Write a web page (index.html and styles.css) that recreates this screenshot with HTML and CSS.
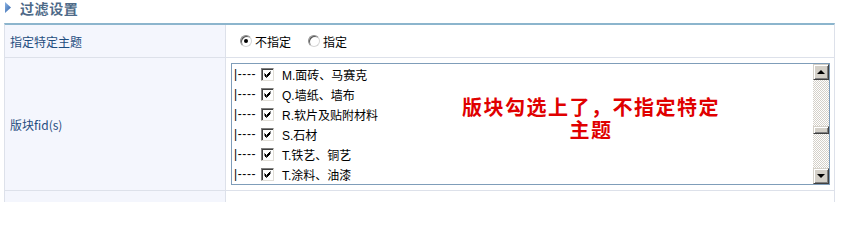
FILE: index.html
```html
<!DOCTYPE html>
<html lang="zh-CN">
<head>
<meta charset="utf-8">
<title>过滤设置</title>
<link rel="stylesheet" href="styles.css">
</head>
<body>
<div class="title">
  <svg class="tri" width="6" height="11" viewBox="0 0 6 11"><defs><linearGradient id="tg" x1="0" y1="0" x2="1" y2="1"><stop offset="0" stop-color="#8fb6e4"/><stop offset="1" stop-color="#2a5ea8"/></linearGradient></defs><polygon points="0,0 6,5.5 0,11" fill="url(#tg)"/></svg>
  <span class="title-text">过滤设置</span>
</div>
<div class="form">
  <div class="row r1">
    <div class="lbl">指定特定主题</div>
    <div class="val radios">
      <label class="radio"><span class="rb on"></span>不指定</label>
      <label class="radio"><span class="rb"></span>指定</label>
    </div>
  </div>
  <div class="row r2">
    <div class="lbl">版块fid(s)</div>
    <div class="val">
      <div class="listbox">
        <div class="items">
          <div class="item"><span class="dash">|----</span><span class="cb"></span><span class="txt">M.面砖、马赛克</span></div>
          <div class="item"><span class="dash">|----</span><span class="cb"></span><span class="txt">Q.墙纸、墙布</span></div>
          <div class="item"><span class="dash">|----</span><span class="cb"></span><span class="txt">R.软片及贴附材料</span></div>
          <div class="item"><span class="dash">|----</span><span class="cb"></span><span class="txt">S.石材</span></div>
          <div class="item"><span class="dash">|----</span><span class="cb"></span><span class="txt">T.铁艺、铜艺</span></div>
          <div class="item"><span class="dash">|----</span><span class="cb"></span><span class="txt">T.涂料、油漆</span></div>
        </div>
        <div class="sbar">
          <div class="sbtn up"><i></i></div>
          <div class="track t1"></div>
          <div class="thumb"></div>
          <div class="track t2"></div>
          <div class="sbtn down"><i></i></div>
        </div>
      </div>
    </div>
  </div>
  <div class="row r3">
    <div class="lbl"></div>
    <div class="val"></div>
  </div>
  <div class="note">版块勾选上了，不指定特定主题</div>
</div>
</body>
</html>
```
FILE: styles.css
```css
* { box-sizing: border-box; }
html, body { margin: 0; padding: 0; background: #fff; }
html, body { height: 202px; overflow: hidden; }
body {
  font-family: "Liberation Sans", "Noto Sans CJK SC", sans-serif;
  font-size: 12px;
  color: #000;
}
.title {
  height: 23px;
  display: flex;
  align-items: flex-start;
  padding-left: 5px;
  gap: 9px;
}
.tri { margin-top: 2px; flex: none; }
.title-text {
  font-size: 14px;
  line-height: 16px;
  font-weight: bold;
  color: #4e6a88;
  letter-spacing: 0.6px;
  font-family: "Noto Sans CJK SC", sans-serif;
}
.form {
  position: relative;
  margin-left: 4px;
  width: 831px;
  border-top: 2px solid #8cb5cd;
  border-left: 1px solid #dde1ea;
  border-right: 1px solid #dde1ea;
}
.row {
  display: grid;
  grid-template-columns: 221px 1fr;
  border-bottom: 1px solid #dde1ea;
}
.lbl {
  background: #f4f6fd;
  border-right: 1px solid #dde1ea;
  color: #1f4d80;
  padding-left: 5px;
  display: flex;
  align-items: center;
  font-family: "Noto Sans CJK SC", sans-serif;
}
.r1 { height: 33px; }
.r2 { height: 133px; }
.r3 { height: 20px; }
.radios {
  display: flex;
  align-items: center;
  padding-left: 14px;
}
.radio {
  display: flex;
  align-items: center;
  gap: 3px;
  margin-right: 17px;
  font-family: "Noto Sans CJK SC", sans-serif;
}
.rb {
  width: 12px;
  height: 12px;
  border-radius: 50%;
  border: 1px solid #8c8c8c;
  border-right-color: #d6d6d6;
  border-bottom-color: #d6d6d6;
  background: #fff;
  position: relative;
  box-shadow: inset 1px 1px 0 #555;
}
.rb.on::after {
  content: "";
  position: absolute;
  left: 3px;
  top: 3px;
  width: 4px;
  height: 4px;
  border-radius: 50%;
  background: #000;
}
.r2 .val { padding: 5px 0 0 5px; }
.listbox {
  width: 599px;
  height: 122px;
  border: 1px solid #7f9db9;
  display: flex;
  background: #fff;
}
.items {
  flex: 1;
  padding-left: 2px;
}
.item {
  height: 20px;
  display: flex;
  align-items: center;
}
.dash { width: 27px; flex: none; letter-spacing: 0.6px; white-space: nowrap; }
.cb {
  width: 13px;
  height: 13px;
  flex: none;
  border: 1px solid;
  border-color: #808080 #e0ddd6 #e0ddd6 #808080;
  box-shadow: inset 1px 1px 0 #404040;
  background: #fff url("data:image/svg+xml,%3Csvg xmlns='http://www.w3.org/2000/svg' width='11' height='11'%3E%3Cpath d='M2.5 4.5 L4.5 6.5 L8.5 2.5 M2.5 5.5 L4.5 7.5 L8.5 3.5 M2.5 6.5 L4.5 8.5 L8.5 4.5' stroke='%23000' stroke-width='1' fill='none'/%3E%3C/svg%3E") no-repeat 0 0;
  margin-right: 8px;
}
.txt { font-family: "Liberation Sans", "Noto Sans CJK SC", sans-serif; }
.sbar {
  width: 16px;
  display: flex;
  flex-direction: column;
  flex: none;
}
.sbtn {
  height: 16px;
  flex: none;
  background: #d4d0c8;
  border: 1px solid;
  border-color: #d4d0c8 #404040 #404040 #d4d0c8;
  box-shadow: inset 1px 1px 0 #fff, inset -1px -1px 0 #808080;
  display: flex;
  align-items: center;
  justify-content: center;
}
.sbtn i {
  width: 0;
  height: 0;
  border-left: 4px solid transparent;
  border-right: 4px solid transparent;
}
.up i { border-bottom: 4px solid #000; }
.down i { border-top: 4px solid #000; }
.track {
  background: repeating-conic-gradient(#d4d0c8 0 25%, #fff 0 50%) 0 0 / 2px 2px;
}
.t1 { height: 46px; flex: none; }
.t2 { flex: 1; }
.thumb {
  height: 8px;
  flex: none;
  background: #d4d0c8;
  border: 1px solid;
  border-color: #d4d0c8 #404040 #404040 #d4d0c8;
  box-shadow: inset 1px 1px 0 #fff, inset -1px -1px 0 #808080;
}
.note {
  position: absolute;
  left: 454px;
  top: 70px;
  width: 264px;
  text-align: center;
  color: #e00000;
  font-size: 20px;
  line-height: 23px;
  font-weight: bold;
  letter-spacing: 1.5px;
  font-family: "Noto Sans CJK SC", sans-serif;
}
```
